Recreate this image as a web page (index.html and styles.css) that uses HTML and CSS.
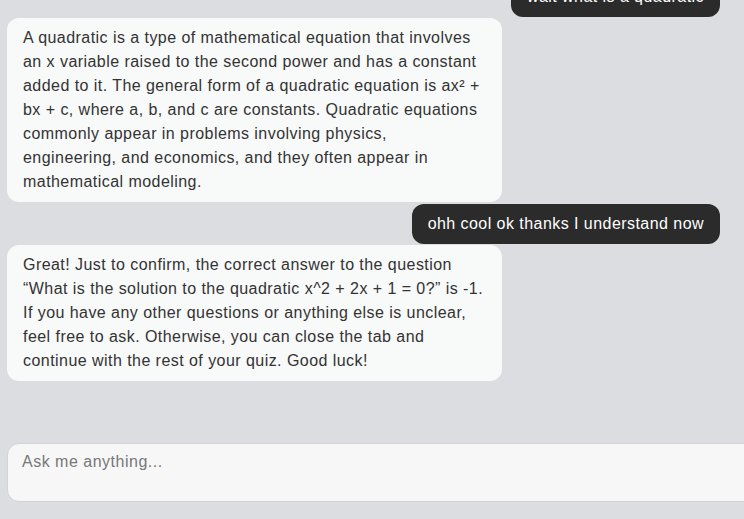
FILE: index.html
```html
<!DOCTYPE html>
<html lang="en">
<head>
<meta charset="utf-8">
<title>Quiz helper chat</title>
<link rel="stylesheet" href="styles.css">
</head>
<body>
<div class="chat">
  <div class="messages">
    <div class="msg user">wait what is a quadratic</div>
    <div class="msg bot">A quadratic is a type of mathematical equation that involves an x variable raised to the second power and has a constant added to it. The general form of a quadratic equation is ax² + bx + c, where a, b, and c are constants. Quadratic equations commonly appear in problems involving physics, engineering, and economics, and they often appear in mathematical modeling.</div>
    <div class="msg user">ohh cool ok thanks I understand now</div>
    <div class="msg bot">Great! Just to confirm, the correct answer to the question “What is the solution to the quadratic x^2 + 2x + 1 = 0?” is -1. If you have any other questions or anything else is unclear, feel free to ask. Otherwise, you can close the tab and continue with the rest of your quiz. Good luck!</div>
  </div>
  <div class="composer">
    <textarea class="input" placeholder="Ask me anything..."></textarea>
  </div>
</div>
</body>
</html>
```

FILE: styles.css
```css
html, body {
  margin: 0;
  padding: 0;
  height: 100%;
  overflow: hidden;
}
body {
  background: #dcdde1;
  font-family: "Liberation Sans", Arial, sans-serif;
  font-size: 16px;
  letter-spacing: 0.45px;
  color: #333333;
}
.chat {
  height: 519px;
  display: flex;
  flex-direction: column;
}
.messages {
  flex: 1;
  min-height: 0;
  overflow: hidden;
  display: flex;
  flex-direction: column;
  justify-content: flex-end;
  gap: 1px;
  padding: 0 24px 62px 7px;
}
.msg {
  flex: none;
  line-height: 24px;
  padding: 8px 16px;
  border-radius: 12px;
}
.bot {
  align-self: flex-start;
  width: 495px;
  box-sizing: border-box;
  padding-right: 18px;
  background: #f8f9f9;
  color: #333333;
}
.user {
  align-self: flex-end;
  background: #2b2b2b;
  color: #ffffff;
  margin-top: 1px;
}
.composer {
  flex: none;
  padding: 0 0 17px 7px;
}
.input {
  display: block;
  box-sizing: border-box;
  width: 770px;
  height: 59px;
  margin: 0;
  padding: 9px 14px;
  border: 1px solid #d2d3d6;
  border-radius: 12px;
  background: #f7f7f7;
  font-family: "Liberation Sans", Arial, sans-serif;
  font-size: 16px;
  letter-spacing: 0.5px;
  color: #333333;
  resize: none;
  outline: none;
}
.input::placeholder {
  color: #777777;
}
```
